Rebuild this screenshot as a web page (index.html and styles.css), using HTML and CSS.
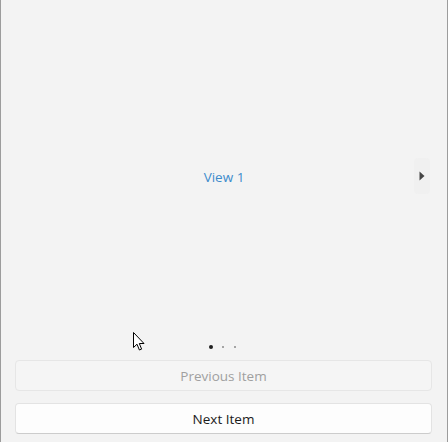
FILE: index.html
```html
<!DOCTYPE html>
<html>
<head>
<meta charset="utf-8">
<link rel="stylesheet" href="styles.css">
</head>
<body>
<div class="page">
  <div class="flipview">
    <div class="item">View 1</div>
    <button class="flip-next" aria-label="Next">
      <svg width="6" height="10" viewBox="0 0 6 10"><path d="M0.5 0.5 L5.5 5 L0.5 9.5 Z" fill="#444"/></svg>
    </button>
  </div>
  <div class="pager">
    <span class="pip active"></span>
    <span class="pip"></span>
    <span class="pip"></span>
  </div>
  <button class="btn disabled">Previous Item</button>
  <button class="btn primary">Next Item</button>
  <svg class="cursor" width="13" height="20" viewBox="0 0 13 20">
    <path d="M0.5 0.5 L0.5 15.5 L4 12.2 L6.4 18 L8.6 17.1 L6.3 11.5 L11 11.5 Z" fill="#fff" stroke="#000" stroke-width="1" stroke-linejoin="miter"/>
  </svg>
</div>
</body>
</html>
```

FILE: styles.css
```css
html, body {
  margin: 0;
  padding: 0;
}
body {
  font-family: "Open Sans", "Noto Sans", sans-serif;
  font-size: 13.5px;
  background: #f3f3f3;
}
.page {
  position: relative;
  width: 448px;
  height: 442px;
  box-sizing: border-box;
  border-left: 1px solid #9c9c9c;
  border-right: 1px solid #9c9c9c;
  background: #f3f3f3;
  display: flex;
  flex-direction: column;
}
.flipview {
  position: relative;
  height: 340px;
  box-sizing: border-box;
  padding-top: 14px;
  display: flex;
  align-items: center;
  justify-content: center;
}
.item {
  color: #3d8ccc;
  font-size: 13.5px;
}
.flip-next {
  position: absolute;
  right: 17px;
  top: 158px;
  width: 16px;
  height: 36px;
  padding: 0;
  border: none;
  border-radius: 4px;
  background: #f0f0f0;
  display: flex;
  align-items: center;
  justify-content: center;
}
.pager {
  height: 20px;
  box-sizing: border-box;
  padding-top: 5px;
  padding-right: 2px;
  display: flex;
  justify-content: center;
  align-items: flex-start;
  gap: 8px;
}
.pip {
  width: 4px;
  height: 4px;
  display: flex;
  align-items: center;
  justify-content: center;
}
.pip::before {
  content: "";
  width: 2px;
  height: 2px;
  border-radius: 50%;
  background: #8a8a8a;
}
.pip.active::before {
  width: 4px;
  height: 4px;
  background: #1f1f1f;
}
.btn {
  height: 31px;
  margin: 0 15px 0 14px;
  box-sizing: border-box;
  border-radius: 4px;
  font-family: inherit;
  font-size: 13.5px;
  padding: 0;
}
.btn.disabled {
  background: #f5f5f5;
  border: 1px solid #e6e6e6;
  color: #a0a0a0;
}
.btn.primary {
  margin-top: 12px;
  background: #fdfdfd;
  border: 1px solid #e3e3e3;
  border-bottom-color: #cccccc;
  color: #1b1b1b;
}
.cursor {
  position: absolute;
  left: 132px;
  top: 332px;
}
```
